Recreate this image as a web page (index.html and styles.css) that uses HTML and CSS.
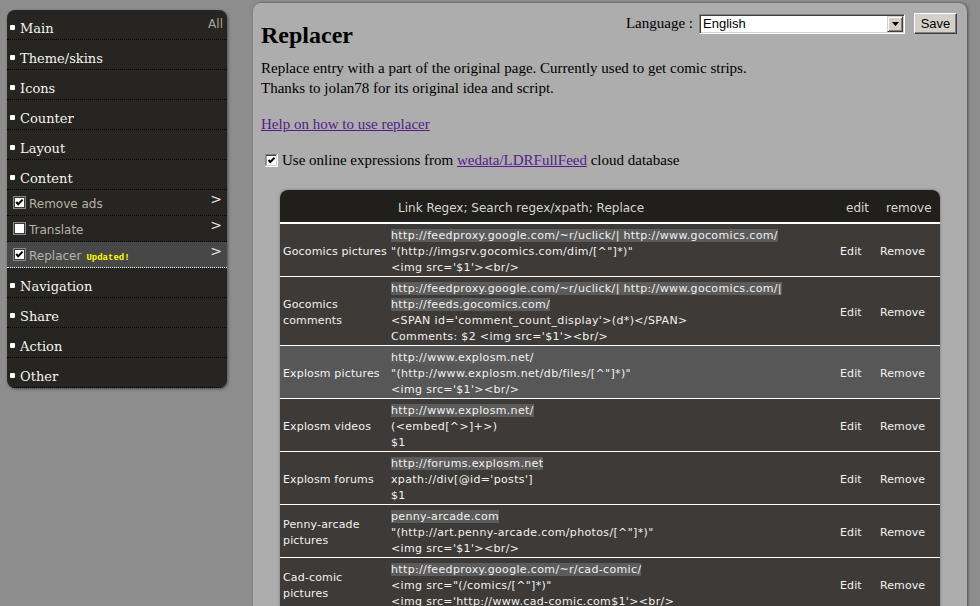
FILE: index.html
```html
<!DOCTYPE html>
<html>
<head>
<meta charset="utf-8">
<title>Replacer</title>
<link rel="stylesheet" href="styles.css">
</head>
<body>
<div class="page">
  <nav class="sidebar">
    <div class="item"><span class="all">All</span><span class="bullet"></span>Main</div>
    <div class="item"><span class="bullet"></span>Theme/skins</div>
    <div class="item"><span class="bullet"></span>Icons</div>
    <div class="item"><span class="bullet"></span>Counter</div>
    <div class="item"><span class="bullet"></span>Layout</div>
    <div class="item"><span class="bullet"></span>Content</div>
    <div class="sub"><span class="arrow">&gt;</span><span class="cb"><svg width="13" height="13" viewBox="0 0 13 13"><rect x="0.5" y="0.5" width="12" height="12" fill="#fff" stroke="#8a8a8a"/><rect x="1.5" y="1.5" width="10" height="10" fill="none" stroke="#3a3a3a"/><path d="M3.2 6 L5.2 8.2 L9.6 3.6" stroke="#000" stroke-width="2" fill="none"/></svg></span>Remove ads</div>
    <div class="sub"><span class="arrow">&gt;</span><span class="cb"><svg width="13" height="13" viewBox="0 0 13 13"><rect x="0.5" y="0.5" width="12" height="12" fill="#fff" stroke="#8a8a8a"/><rect x="1.5" y="1.5" width="10" height="10" fill="none" stroke="#3a3a3a"/></svg></span>Translate</div>
    <div class="sub current"><span class="arrow">&gt;</span><span class="cb"><svg width="13" height="13" viewBox="0 0 13 13"><rect x="0.5" y="0.5" width="12" height="12" fill="#fff" stroke="#8a8a8a"/><rect x="1.5" y="1.5" width="10" height="10" fill="none" stroke="#3a3a3a"/><path d="M3.2 6 L5.2 8.2 L9.6 3.6" stroke="#000" stroke-width="2" fill="none"/></svg></span>Replacer<span class="updated">Updated!</span></div>
    <div class="item"><span class="bullet"></span>Navigation</div>
    <div class="item"><span class="bullet"></span>Share</div>
    <div class="item"><span class="bullet"></span>Action</div>
    <div class="item"><span class="bullet"></span>Other</div>
  </nav>

  <main class="panel">
    <div class="head">
      <h1>Replacer</h1>
      <div class="langbar">
        <span class="langlabel">Language :</span>
        <div class="select"><span class="selval">English</span><span class="dropbtn"><svg width="7" height="4" viewBox="0 0 7 4"><path d="M0 0 H7 L3.5 4 Z" fill="#000"/></svg></span></div>
        <div class="btn">Save</div>
      </div>
    </div>
    <p class="intro">Replace entry with a part of the original page. Currently used to get comic strips.<br>Thanks to jolan78 for its original idea and script.</p>
    <p class="help"><a href="#">Help on how to use replacer</a></p>
    <p class="online"><span class="wcb"><svg width="13" height="13" viewBox="0 0 13 13"><rect x="0" y="0" width="13" height="13" fill="#fff"/><path d="M0 12.5 V0.5 H12.5" stroke="#808080" fill="none"/><path d="M1 11.5 V1.5 H11.5" stroke="#404040" fill="none"/><path d="M0.5 12.5 H12.5 V0" stroke="#fff" fill="none"/><path d="M1.5 11.5 H11.5 V1" stroke="#d4d0c8" fill="none"/><path d="M3.5 6 L5.3 8 L9.5 3.8" stroke="#000" stroke-width="2" fill="none"/></svg></span>Use online expressions from <a href="#">wedata/LDRFullFeed</a> cloud database</p>

    <table class="rules">
      <colgroup><col class="c1"><col class="c2"><col class="c3"><col class="c4"></colgroup>
      <thead>
        <tr><th></th><th class="hdesc">Link Regex; Search regex/xpath; Replace</th><th class="hedit">edit</th><th class="hrem">remove</th></tr>
      </thead>
      <tbody>
        <tr>
          <td class="name">Gocomics pictures</td>
          <td class="expr"><span class="hl">http://feedproxy.google.com/~r/uclick/| http://www.gocomics.com/</span><br>"(http://imgsrv.gocomics.com/dim/[^"]*)"<br>&lt;img src='$1'&gt;&lt;br/&gt;</td>
          <td class="act">Edit</td><td class="act">Remove</td>
        </tr>
        <tr>
          <td class="name">Gocomics comments</td>
          <td class="expr"><span class="hl">http://feedproxy.google.com/~r/uclick/| http://www.gocomics.com/|<br>http://feeds.gocomics.com/</span><br>&lt;SPAN id='comment_count_display'&gt;(d*)&lt;/SPAN&gt;<br>Comments: $2 &lt;img src='$1'&gt;&lt;br/&gt;</td>
          <td class="act">Edit</td><td class="act">Remove</td>
        </tr>
        <tr class="hover">
          <td class="name">Explosm pictures</td>
          <td class="expr"><span class="hl">http://www.explosm.net/</span><br>"(http://www.explosm.net/db/files/[^"]*)"<br>&lt;img src='$1'&gt;&lt;br/&gt;</td>
          <td class="act">Edit</td><td class="act">Remove</td>
        </tr>
        <tr>
          <td class="name">Explosm videos</td>
          <td class="expr"><span class="hl">http://www.explosm.net/</span><br>(&lt;embed[^&gt;]+&gt;)<br>$1</td>
          <td class="act">Edit</td><td class="act">Remove</td>
        </tr>
        <tr>
          <td class="name">Explosm forums</td>
          <td class="expr"><span class="hl">http://forums.explosm.net</span><br>xpath://div[@id='posts']<br>$1</td>
          <td class="act">Edit</td><td class="act">Remove</td>
        </tr>
        <tr>
          <td class="name">Penny-arcade pictures</td>
          <td class="expr"><span class="hl">penny-arcade.com</span><br>"(http://art.penny-arcade.com/photos/[^"]*)"<br>&lt;img src='$1'&gt;&lt;br/&gt;</td>
          <td class="act">Edit</td><td class="act">Remove</td>
        </tr>
        <tr>
          <td class="name">Cad-comic pictures</td>
          <td class="expr"><span class="hl">http://feedproxy.google.com/~r/cad-comic/</span><br>&lt;img src="(/comics/[^"]*)"<br>&lt;img src='http://www.cad-comic.com$1'&gt;&lt;br/&gt;</td>
          <td class="act">Edit</td><td class="act">Remove</td>
        </tr>
      </tbody>
    </table>
  </main>
</div>
</body>
</html>
```

FILE: styles.css
```css
html, body {
  margin: 0;
  padding: 0;
  height: 100%;
  overflow: hidden;
}
body {
  background: #8d8d8d;
  font-family: "Liberation Serif", "Times New Roman", serif;
  font-size: 15px;
  color: #000;
}
.page {
  display: flex;
  align-items: flex-start;
}

/* Sidebar */
.sidebar {
  margin: 10px 0 0 7px;
  width: 220px;
  background: #262521;
  border-radius: 8px;
  overflow: hidden;
  box-shadow: 1px 1px 3px rgba(0,0,0,0.45);
  flex: none;
}
.item {
  height: 21px;
  padding: 8px 0 0 3px;
  line-height: 21px;
  font-family: "DejaVu Serif", serif;
  font-size: 13px;
  color: #f4f4f0;
  border-bottom: 1px dotted #000;
}
.bullet {
  display: inline-block;
  width: 5px;
  height: 5px;
  border-radius: 1px;
  background: #fff;
  margin-right: 5px;
  vertical-align: 3px;
}
.all {
  float: right;
  margin: -1px 4px 0 0;
  font-family: "DejaVu Sans", sans-serif;
  font-size: 12px;
  line-height: 14px;
  color: #a9a69c;
}
.sub {
  height: 22px;
  padding: 3px 0 0 6px;
  line-height: 22px;
  font-family: "DejaVu Sans", sans-serif;
  font-size: 12px;
  color: #b7b3a7;
  border-bottom: 1px dotted #000;
}
.sub.current {
  background: #474747;
  border-bottom-color: #fff;
}
.cb {
  display: inline-block;
  width: 13px;
  height: 13px;
  margin-right: 3px;
  vertical-align: -1px;
}
.cb svg, .wcb svg { display: block; }
.arrow {
  float: right;
  margin-right: 5px;
  font-size: 14px;
  line-height: 13px;
  color: #e2e2e2;
}
.updated {
  margin-left: 5px;
  font-family: "Liberation Mono", monospace;
  font-weight: bold;
  font-size: 9px;
  color: #ffff00;
}

/* Main panel */
.panel {
  margin: 3px 0 0 26px;
  width: 698px;
  min-height: 700px;
  padding: 10px 8px;
  background: #adadad;
  border-radius: 8px 8px 0 0;
  box-shadow: 1px 0 3px rgba(0,0,0,0.45);
  flex: none;
}
.head {
  display: flex;
  justify-content: space-between;
  align-items: flex-start;
}
h1 {
  margin: 7px 0 0 0;
  font-size: 24px;
  line-height: 30px;
  font-weight: bold;
}
.langbar {
  display: flex;
  align-items: center;
  margin-right: 2px;
}
.langlabel {
  font-size: 15px;
  margin-right: 6px;
}
.select {
  box-sizing: border-box;
  width: 206px;
  height: 20px;
  background: #fff;
  border: 1px solid;
  border-color: #808080 #fff #fff #808080;
  box-shadow: inset 1px 1px 0 #404040, inset -1px -1px 0 #d4d0c8;
  display: flex;
  align-items: center;
  justify-content: space-between;
  padding: 0 1px 0 3px;
}
.selval {
  font-family: "Liberation Sans", Arial, sans-serif;
  font-size: 13px;
  color: #000;
}
.dropbtn {
  box-sizing: border-box;
  width: 16px;
  height: 16px;
  background: #d4d0c8;
  border: 1px solid;
  border-color: #d4d0c8 #404040 #404040 #d4d0c8;
  box-shadow: inset 1px 1px 0 #fff, inset -1px -1px 0 #808080;
  display: flex;
  align-items: center;
  justify-content: center;
}
.btn {
  box-sizing: border-box;
  width: 43px;
  height: 21px;
  margin-left: 9px;
  background: #d4d0c8;
  border: 1px solid;
  border-color: #fff #404040 #404040 #fff;
  box-shadow: inset -1px -1px 0 #808080;
  font-family: "Liberation Sans", Arial, sans-serif;
  font-size: 13px;
  line-height: 19px;
  text-align: center;
}
p {
  margin: 16px 0 0 0;
  line-height: 20px;
}
p.intro { margin-top: 8px; }
a { color: #551a8b; }
.online { padding-left: 4px; }
.wcb {
  display: inline-block;
  width: 13px;
  height: 13px;
  margin-right: 4px;
  vertical-align: -2px;
}

/* Table */
.rules {
  margin: 20px auto 0;
  width: 660px;
  table-layout: fixed;
  border-collapse: separate;
  border-spacing: 0;
  font-family: "DejaVu Sans", sans-serif;
  font-size: 11px;
  color: #f2f2f2;
  border-radius: 8px 8px 0 0;
  overflow: hidden;
  box-shadow: 0 0 3px rgba(0,0,0,0.35);
}
col.c1 { width: 111px; }
col.c2 { width: 444px; }
col.c3 { width: 40px; }
col.c4 { width: 65px; }
.rules th {
  height: 29px;
  padding: 3px 0 0 0;
  background: #201f1b;
  border-bottom: 2px solid #fff;
  font-weight: normal;
  font-size: 12px;
  color: #d6d6d6;
  text-align: left;
  vertical-align: middle;
}
.rules th.hdesc { padding-left: 7px; }
.rules th.hedit { padding-left: 11px; }
.rules th.hrem { padding-left: 11px; }
.rules td {
  background: #3d3a37;
  border-bottom: 1px solid #fff;
  padding: 4px 0 0 0;
  line-height: 16px;
  vertical-align: middle;
}
.rules tr.hover td { background: #575757; }
.rules td.name { padding-left: 3px; letter-spacing: 0.15px; }
.rules td.expr { white-space: nowrap; overflow: hidden; letter-spacing: 0.35px; }
.rules td.act { padding-left: 5px; letter-spacing: 0.1px; }
.hl { background: #5b5b5b; }
```
